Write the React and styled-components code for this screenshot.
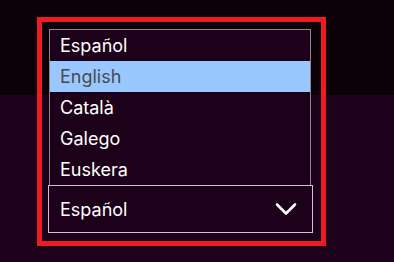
import React from 'react';
import styled, { createGlobalStyle } from 'styled-components';

const languages = ['Español', 'English', 'Català', 'Galego', 'Euskera'];

const App = () => {
	const selected = 'Español';
	const highlighted = 'English';
	return (
		<>
			<GlobalStyle />
			<Page>
				<TopBand />
				<Stage>
					<FocusRing>
						<Field>
							<ListBox role="listbox">
								{languages.map((lang) => (
									<Option key={lang} $active={lang === highlighted}>
										{lang}
									</Option>
								))}
							</ListBox>
							<Select>
								<span>{selected}</span>
								<svg width="22" height="14" viewBox="0 0 22 14" fill="none">
									<path
										d="M2 2.5l9 9 9-9"
										stroke="#fff"
										strokeWidth="2.6"
										strokeLinecap="round"
										strokeLinejoin="round"
									/>
								</svg>
							</Select>
						</Field>
					</FocusRing>
				</Stage>
			</Page>
		</>
	);
};

export default App;

const GlobalStyle = createGlobalStyle`
	* {
		box-sizing: border-box;
	}
	body {
		margin: 0;
		font-family: Inter, 'Noto Sans', sans-serif;
		background: #1d0019;
	}
`;

const Page = styled.div`
	position: relative;
	width: 394px;
	height: 262px;
	background: #1d0019;
	overflow: hidden;
`;

const TopBand = styled.div`
	height: 95px;
	background: #0c0009;
`;

const Stage = styled.div`
	position: absolute;
	top: 17px;
	left: 37px;
`;

const FocusRing = styled.div`
	width: 289px;
	height: 229px;
	border: 5px solid #ed1c24;
	padding: 7px 8px 8px 6px;
`;

const Field = styled.div`
	display: flex;
	flex-direction: column;
	width: 265px;
`;

const ListBox = styled.div`
	margin: 0 2px 0 1px;
	border: 1px solid #8a8a8a;
	border-bottom: none;
	background: #1d0019;
	display: flex;
	flex-direction: column;
`;

const Option = styled.div`
	height: 31px;
	padding-left: 10px;
	display: flex;
	align-items: center;
	font-size: 18px;
	color: ${(p) => (p.$active ? '#4a4a4a' : '#ffffff')};
	background: ${(p) => (p.$active ? '#99c8ff' : 'transparent')};
`;

const Select = styled.div`
	height: 48px;
	border: 1px solid #e8b4e0;
	display: flex;
	align-items: center;
	justify-content: space-between;
	padding: 0 15px 0 11px;
	font-size: 18px;
	color: #ffffff;
	background: #1d0019;

	svg {
		display: block;
	}
`;
